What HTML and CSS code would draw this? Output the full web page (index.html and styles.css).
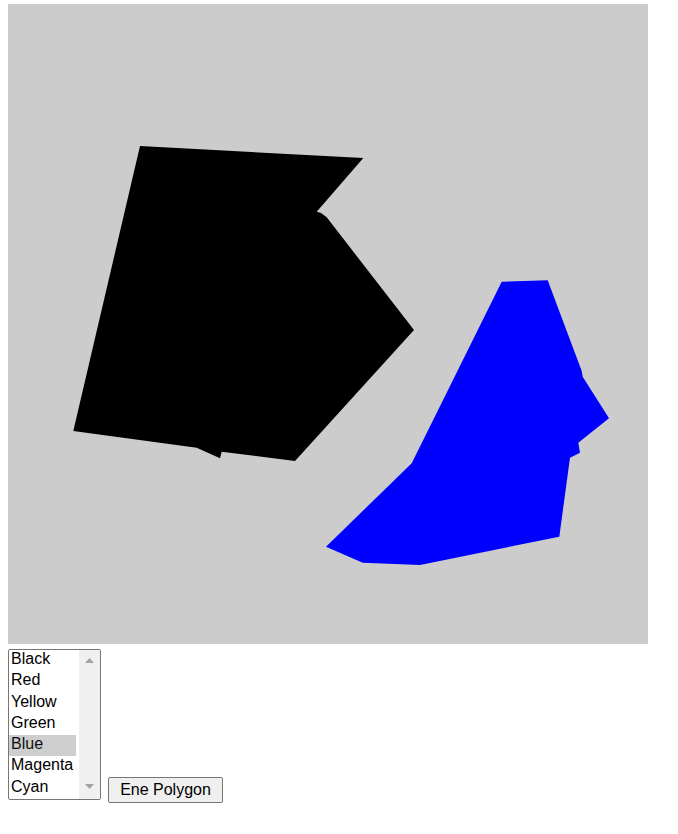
FILE: index.html
```html
<!DOCTYPE html>
<html>
<head>
<meta charset="utf-8">
<link rel="stylesheet" href="styles.css">
</head>
<body>
<svg class="board" width="640" height="640" viewBox="8 4 640 640">
  <rect x="8" y="4" width="640" height="640" fill="#cccccc"/>
  <polygon fill="#000000" points="140,146 363.3,158 316.7,211.7 321,213 326.7,217.3 414,330 295,461 221.7,451.7 220,458.3 196.7,447.7 73.3,431"/>
  <polygon fill="#0000ff" points="501.7,281.7 547.7,280.3 581.7,371 582.7,376.7 609,418.3 578.3,442.7 580,452.7 570,457.7 559.3,536.7 420,565 362.7,562.7 326,546.7 411.7,463.3"/>
</svg>
<div class="controls">
  <div class="listbox">
    <select class="colors" size="7">
      <option>Black</option>
      <option>Red</option>
      <option>Yellow</option>
      <option>Green</option>
      <option selected>Blue</option>
      <option>Magenta</option>
      <option>Cyan</option>
    </select>
    <div class="scrollbar">
      <svg class="arrow arrow-up" width="9" height="5" viewBox="0 0 9 5"><polygon points="4.5,0 9,5 0,5" fill="#a3a3a3"/></svg>
      <svg class="arrow arrow-down" width="9" height="5" viewBox="0 0 9 5"><polygon points="0,0 9,0 4.5,5" fill="#a3a3a3"/></svg>
    </div>
  </div>
  <button class="new-btn" type="button">Ene Polygon</button>
</div>
</body>
</html>
```
FILE: styles.css
```css
html, body {
  background: #ffffff;
}
body {
  margin: 4px 8px 8px 8px;
  font-family: "Liberation Sans", Arial, sans-serif;
  font-size: 16px;
}
.board {
  display: block;
}
.controls {
  margin-top: 5px;
  display: flex;
  align-items: flex-start;
  gap: 7px;
}
.listbox {
  display: flex;
  box-sizing: border-box;
  width: 93px;
  height: 151px;
  border: 1px solid #767676;
  border-radius: 2px;
  background: #fff;
  overflow: hidden;
}
.colors {
  font-family: "Liberation Sans", Arial, sans-serif;
  font-size: 16px;
  box-sizing: border-box;
  width: 70px;
  height: 149px;
  padding: 0 3px 0 0;
  margin: 0;
  border: none;
  outline: none;
  color: #000;
  background: #fff;
  overflow: hidden;
}
.colors option {
  padding: 0 2px;
  line-height: 21.3px;
  height: 21.3px;
}
.scrollbar {
  width: 21px;
  height: 149px;
  background: #f0f0f0;
  display: flex;
  flex-direction: column;
  align-items: center;
  justify-content: space-between;
  padding: 8px 0 10px 0;
  box-sizing: border-box;
}
.arrow {
  display: block;
}
.new-btn {
  font-family: "Liberation Sans", Arial, sans-serif;
  font-size: 16px;
  width: 115px;
  height: 26px;
  margin: 128px 0 0 0;
  padding: 0;
  border: 1px solid #767676;
  border-radius: 2px;
  background: #efefef;
  color: #000;
}
```
